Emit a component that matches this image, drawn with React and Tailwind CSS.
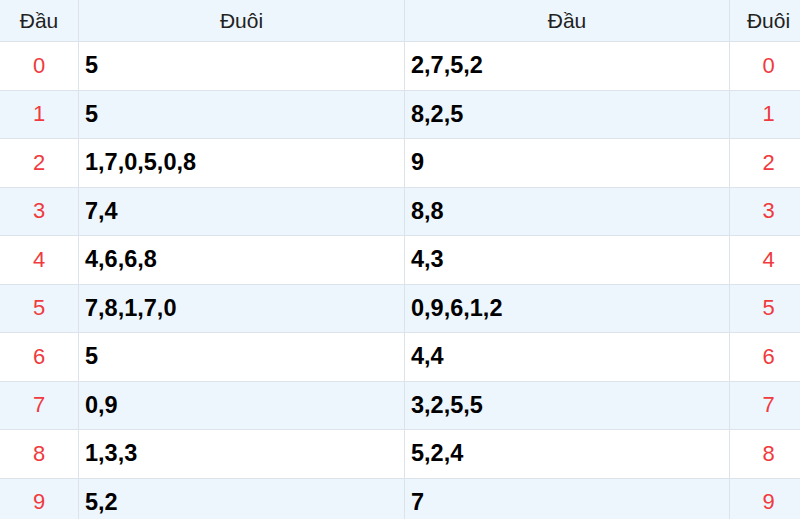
const ROWS = [
  { n: 0, tail: '5', head: '2,7,5,2' },
  { n: 1, tail: '5', head: '8,2,5' },
  { n: 2, tail: '1,7,0,5,0,8', head: '9' },
  { n: 3, tail: '7,4', head: '8,8' },
  { n: 4, tail: '4,6,6,8', head: '4,3' },
  { n: 5, tail: '7,8,1,7,0', head: '0,9,6,1,2' },
  { n: 6, tail: '5', head: '4,4' },
  { n: 7, tail: '0,9', head: '3,2,5,5' },
  { n: 8, tail: '1,3,3', head: '5,2,4' },
  { n: 9, tail: '5,2', head: '7' },
];

// last column runs a few px past the window edge, as in the screenshot
const GRID = 'grid grid-cols-[79px_326px_325px_77px]';
const CELL = 'flex items-center border-r border-[#dde3ea]';

export default function App() {
  return (
    <div className="h-[519px] w-[800px] overflow-hidden bg-white font-['Liberation_Sans',Arial,sans-serif]">
      <div className="w-[807px]">
        <div className={`${GRID} h-[42px] border-b border-[#dde3ea] bg-[#eef6fd] text-[21px] text-[#222]`}>
          <div className={`${CELL} justify-center`}>Đầu</div>
          <div className={`${CELL} justify-center`}>Đuôi</div>
          <div className={`${CELL} justify-center`}>Đầu</div>
          <div className="flex items-center justify-center">Đuôi</div>
        </div>

        {ROWS.map((row, i) => (
          <div
            key={row.n}
            className={`${GRID} h-[48.5px] border-b border-[#dde3ea] ${i % 2 ? 'bg-[#eef6fd]' : 'bg-white'}`}
          >
            <div className={`${CELL} justify-center pb-[1px] text-[22px] text-[#f03a3e]`}>{row.n}</div>
            <div className={`${CELL} pl-[6px] text-[23.5px] font-bold text-black`}>{row.tail}</div>
            <div className={`${CELL} pl-[6px] text-[23.5px] font-bold text-black`}>{row.head}</div>
            <div className="flex items-center justify-center pb-[1px] text-[22px] text-[#f03a3e]">{row.n}</div>
          </div>
        ))}
      </div>
    </div>
  );
}
